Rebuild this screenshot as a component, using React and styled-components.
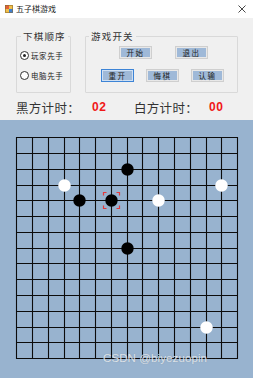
import React from "react";
import styled, { createGlobalStyle } from "styled-components";

const Global = createGlobalStyle`
  html, body { margin: 0; padding: 0; }
  body { width: 253px; height: 378px; overflow: hidden; background: #f0f0f0;
    font-family: "Noto Sans CJK SC", "Noto Sans", sans-serif; }
`;

const Window = styled.div`
  width: 253px; height: 378px; display: flex; flex-direction: column; overflow: hidden;
`;

const TitleBar = styled.div`
  height: 18px; background: #ffffff; display: flex; align-items: center;
  padding: 0 6px 0 5px; gap: 3px; flex-shrink: 0;
`;

const TitleText = styled.span`
  font-size: 8px; color: #222; line-height: 1; flex: 1;
`;

const Close = styled.span`
  width: 8px; height: 8px; display: flex; margin-right: 1px;
`;

const ControlArea = styled.div`
  height: 102px; background: #f0f0f0; display: flex; flex-direction: column;
  padding: 13px 0 0 16px; box-sizing: border-box; flex-shrink: 0;
`;

const GroupsRow = styled.div`
  display: flex; gap: 14px; height: 62px;
`;

const Group = styled.fieldset`
  margin: 0; padding: 0; box-sizing: border-box; width: ${p => p.$w}px; height: 62px;
  border: 1px solid #d9d9d9; border-radius: 1px; position: relative;
  display: flex; flex-direction: column;
`;

const Legend = styled.legend`
  font-size: 9.5px; color: #333; padding: 0 2px; margin-left: ${p => p.$ml}px;
  line-height: 10px; letter-spacing: 1.2px;
`;

const RadioList = styled.div`
  display: flex; flex-direction: column; gap: 11px; padding: 10px 0 0 3px;
`;

const RadioRow = styled.label`
  display: flex; align-items: center; gap: 2px; font-size: 7.5px; color: #222;
  letter-spacing: 0.6px; line-height: 9px;
`;

const RadioCircle = styled.span`
  width: 7px; height: 7px; border-radius: 50%; border: 1px solid #333; background: #fff;
  display: flex; align-items: center; justify-content: center; box-sizing: content-box;
  &::after { content: ""; width: 3.5px; height: 3.5px; border-radius: 50%;
    background: ${p => (p.$on ? "#222" : "transparent")}; }
`;

const ButtonGrid = styled.div`
  display: flex; flex-direction: column; gap: 10px; padding: 5px 0 0 15px;
`;

const ButtonRow = styled.div`
  display: flex; gap: ${p => p.$gap}px; padding-left: ${p => p.$pl}px;
`;

const Btn = styled.button`
  width: 33px; height: 13px; padding: 0; margin: 0; box-sizing: border-box;
  border: 1px solid ${p => (p.$focus ? "#3d84d6" : "#cfcfcf")};
  background: #9fb9d8; box-shadow: inset 0 0 0 1px ${p => (p.$focus ? "#cfe0f3" : "#e8e8e8")};
  font-family: "Noto Sans CJK SC", sans-serif; font-size: 7.5px; color: #222;
  letter-spacing: 1.5px; line-height: 11px; display: flex; align-items: center; justify-content: center;
`;

const TimerRow = styled.div`
  display: flex; align-items: center; height: 26px; padding-top: 1px;
`;

const TimerLabel = styled.span`
  font-size: 12.5px; color: #333; width: ${p => p.$w}px; letter-spacing: 0.3px;
`;

const TimerValue = styled.span`
  font-family: "Liberation Sans", Arial, sans-serif; font-size: 12px; font-weight: bold;
  color: #f01818; width: ${p => p.$w}px; letter-spacing: 0.5px;
`;

const BoardPanel = styled.div`
  flex: 1; background: #98b3cf; position: relative;
`;

const Watermark = styled.span`
  position: absolute; left: 103px; top: 232px; font-family: "Liberation Sans", Arial, sans-serif;
  font-size: 11.5px; color: rgba(235, 240, 245, 0.85); letter-spacing: 0.1px;
  text-shadow: 0 0 1px rgba(120,130,140,0.6);
`;

const X0 = 16.3, Y0 = 17.3, STEP = 15.77;
const stones = [
  { c: 7, r: 2, b: true },
  { c: 3, r: 3, b: false },
  { c: 4, r: 4, b: true },
  { c: 6, r: 4, b: true, last: true },
  { c: 9, r: 4, b: false },
  { c: 13, r: 3, b: false },
  { c: 7, r: 7, b: true },
  { c: 12, r: 12, b: false },
];

function Board() {
  const lines = [];
  for (let i = 0; i < 15; i++) {
    const x = Math.round(X0 + i * STEP) + 0.5;
    const y = Math.round(Y0 + i * STEP) + 0.5;
    lines.push(<line key={"v" + i} x1={x} y1={Y0 - 0.2} x2={x} y2={Y0 + 14 * STEP + 0.8} />);
    lines.push(<line key={"h" + i} x1={X0 - 0.2} y1={y} x2={X0 + 14 * STEP + 0.8} y2={y} />);
  }
  const marker = (cx, cy) => {
    const h = 8, a = 3;
    const d = [
      `M${cx - h} ${cy - h + a}V${cy - h}H${cx - h + a}`,
      `M${cx + h - a} ${cy - h}H${cx + h}V${cy - h + a}`,
      `M${cx - h} ${cy + h - a}V${cy + h}H${cx - h + a}`,
      `M${cx + h - a} ${cy + h}H${cx + h}V${cy + h - a}`,
    ].join("");
    return <path d={d} stroke="#e4393c" strokeWidth="1.2" fill="none" />;
  };
  return (
    <svg width="253" height="258" viewBox="0 0 253 258" style={{ display: "block" }}>
      <g stroke="#0c0c0c" strokeWidth="1.1">{lines}</g>
      {stones.map((s, i) => {
        const cx = Math.round(X0 + s.c * STEP) + 0.5;
        const cy = Math.round(Y0 + s.r * STEP) + 0.5;
        return (
          <g key={i}>
            <circle cx={cx} cy={cy} r="6.2" fill={s.b ? "#000" : "#fff"} />
            {s.last && marker(cx, cy)}
          </g>
        );
      })}
    </svg>
  );
}

const AppIcon = () => (
  <svg width="8" height="8" viewBox="0 0 8 8">
    <rect x="0" y="0" width="8" height="8" fill="#f2c14a" />
    <rect x="0" y="0" width="4" height="4" fill="#e0603a" />
    <rect x="4" y="4" width="4" height="4" fill="#3f7fd0" />
    <rect x="0.5" y="0.5" width="7" height="7" fill="none" stroke="#8a6a30" strokeWidth="0.6" />
  </svg>
);

export default function App() {
  return (
    <>
      <Global />
      <Window>
        <TitleBar>
          <AppIcon />
          <TitleText>五子棋游戏</TitleText>
          <Close>
            <svg width="8" height="8" viewBox="0 0 8 8">
              <path d="M0.5 0.5L7.5 7.5M7.5 0.5L0.5 7.5" stroke="#333" strokeWidth="0.9" />
            </svg>
          </Close>
        </TitleBar>
        <ControlArea>
          <GroupsRow>
            <Group $w={55}>
              <Legend $ml={4}>下棋顺序</Legend>
              <RadioList>
                <RadioRow><RadioCircle $on />玩家先手</RadioRow>
                <RadioRow><RadioCircle />电脑先手</RadioRow>
              </RadioList>
            </Group>
            <Group $w={153}>
              <Legend $ml={3}>游戏开关</Legend>
              <ButtonGrid>
                <ButtonRow $gap={23} $pl={18}>
                  <Btn>开始</Btn>
                  <Btn>退出</Btn>
                </ButtonRow>
                <ButtonRow $gap={12} $pl={0}>
                  <Btn $focus>重开</Btn>
                  <Btn>悔棋</Btn>
                  <Btn>认输</Btn>
                </ButtonRow>
              </ButtonGrid>
            </Group>
          </GroupsRow>
          <TimerRow>
            <TimerLabel $w={76}>黑方计时：</TimerLabel>
            <TimerValue $w={42}>02</TimerValue>
            <TimerLabel $w={75}>白方计时：</TimerLabel>
            <TimerValue $w={30}>00</TimerValue>
          </TimerRow>
        </ControlArea>
        <BoardPanel>
          <Board />
          <Watermark>CSDN @biyezuopin</Watermark>
        </BoardPanel>
      </Window>
    </>
  );
}
